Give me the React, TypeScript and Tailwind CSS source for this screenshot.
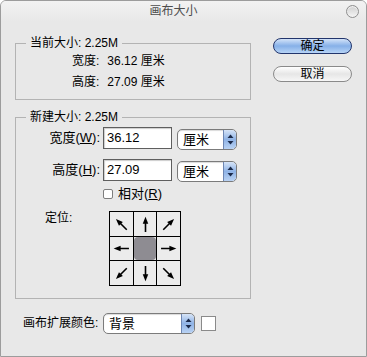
import React from "react";

const FONT = { fontFamily: '"Liberation Sans", "Noto Sans CJK SC", sans-serif' };

function Stepper() {
  return (
    <div className="w-[13px] h-full rounded-r-[4px] border-l border-[#6d86b3] bg-gradient-to-b from-[#d6e4f7] via-[#8fb3e6] to-[#b9d2f3] flex items-center justify-center">
      <svg width="7" height="11" viewBox="0 0 7 11">
        <polygon points="3.5,0.5 6.5,4 0.5,4" fill="#1b2a4a" />
        <polygon points="3.5,10.5 6.5,7 0.5,7" fill="#1b2a4a" />
      </svg>
    </div>
  );
}

function Select({ text, width }: { text: string; width: string }) {
  return (
    <div className={`${width} h-[21px] rounded-[5px] border border-[#7b7b7b] bg-white flex items-stretch overflow-hidden shadow-[inset_0_1px_1px_rgba(0,0,0,0.15)]`}>
      <div className="flex-1 pl-[5px] text-[13px] leading-[19px] text-black">{text}</div>
      <Stepper />
    </div>
  );
}

function Arrow({ deg }: { deg: number }) {
  return (
    <svg width="17" height="17" viewBox="0 0 16 16">
      <g transform={`rotate(${deg} 8 8)`}>
        <line x1="8" y1="15" x2="8" y2="5" stroke="#000" strokeWidth="1.5" />
        <polygon points="8,0.6 5.4,7.2 10.6,7.2" fill="#000" />
      </g>
    </svg>
  );
}

function AnchorGrid() {
  const dirs: (number | null)[] = [315, 0, 45, 270, null, 90, 225, 180, 135];
  return (
    <div className="grid grid-cols-[23px_22px_23px] grid-rows-[24px_23px_24px] gap-px bg-black p-px w-[72px] h-[75px]">
      {dirs.map((d, i) =>
        d === null ? (
          <div key={i} className="bg-[#e8e8e8] flex">
            <div className="flex-1 rounded-[4px] bg-[#8e8c92]" />
          </div>
        ) : (
          <div key={i} className="bg-[#ececec] flex items-center justify-center">
            <Arrow deg={d} />
          </div>
        )
      )}
    </div>
  );
}

function GroupHeader({ title }: { title: string }) {
  return (
    <div className="h-[14px] flex">
      <div className="w-[11px] h-[7px] self-end border-l border-t border-[#b3b3b3]" />
      <div className="px-[4px] text-[12px] leading-[14px] text-black">{title}</div>
      <div className="flex-1 h-[7px] self-end border-r border-t border-[#b3b3b3]" />
    </div>
  );
}

export default function App() {
  return (
    <div className="w-[367px] h-[357px] bg-white" style={FONT}>
      <div className="w-full h-full rounded-t-[6px] border border-[#9c9c9c] bg-[#e8e8e8] flex flex-col overflow-hidden">
        {/* title bar */}
        <div className="h-[21px] flex items-center bg-gradient-to-b from-[#f2f2f2] to-[#e8e8e8]">
          <div className="flex-1 text-center text-[12px] leading-[21px] text-[#4d4d4d]">画布大小</div>
          <div className="w-[13px] h-[13px] mr-[7px] rounded-full border border-[#8e8e8e] bg-gradient-to-b from-[#cfcfcf] to-[#f5f5f5] shadow-[inset_0_1px_1px_rgba(255,255,255,0.8)]" />
        </div>
        {/* body */}
        <div className="flex-1 flex">
          <div className="pl-[14px] w-[250px] flex flex-col">
            {/* current size */}
            <div className="mt-[14px]">
              <GroupHeader title="当前大小: 2.25M" />
              <div className="border-l border-r border-b border-[#b3b3b3] pl-[56px] pt-[1px] pb-[6px] text-[12px] leading-[21px] text-black">
                <div className="flex">
                  <span>宽度:</span>
                  <span className="ml-[8px]">36.12 厘米</span>
                </div>
                <div className="flex">
                  <span>高度:</span>
                  <span className="ml-[8px]">27.09 厘米</span>
                </div>
              </div>
            </div>
            {/* new size */}
            <div className="mt-[10px]">
              <GroupHeader title="新建大小: 2.25M" />
              <div className="border-l border-r border-b border-[#b3b3b3] pt-[3px] pb-[12px]">
                <div className="flex items-start h-[22px]">
                  <div className="w-[84px] text-right text-[13px] leading-[22px] text-black">
                    宽度(<span className="underline">W</span>):
                  </div>
                  <div className="ml-[3px] w-[69px] h-[22px] border border-[#5e5e5e] bg-white pl-[3px] text-[13px] leading-[20px] text-black shadow-[inset_1px_1px_1px_rgba(0,0,0,0.2)]">36.12</div>
                  <div className="ml-[5px] mt-[2px]">
                    <Select text="厘米" width="w-[60px]" />
                  </div>
                </div>
                <div className="mt-[10px] flex items-start h-[22px]">
                  <div className="w-[84px] text-right text-[13px] leading-[22px] text-black">
                    高度(<span className="underline">H</span>):
                  </div>
                  <div className="ml-[3px] w-[69px] h-[22px] border border-[#5e5e5e] bg-white pl-[3px] text-[13px] leading-[20px] text-black shadow-[inset_1px_1px_1px_rgba(0,0,0,0.2)]">27.09</div>
                  <div className="ml-[5px] mt-[2px]">
                    <Select text="厘米" width="w-[60px]" />
                  </div>
                </div>
                <div className="mt-[6px] h-[14px] flex items-center pl-[87px]">
                  <div className="w-[10px] h-[10px] rounded-[2px] border border-[#7e7e7e] bg-white" />
                  <span className="ml-[5px] text-[13px] leading-[14px] text-black">
                    相对(<span className="underline">R</span>)
                  </span>
                </div>
                <div className="mt-[10px] flex items-start pl-[29px]">
                  <div className="w-[64px] text-[12px] leading-[14px] text-black">定位:</div>
                  <AnchorGrid />
                </div>
              </div>
            </div>
            {/* canvas extension colour */}
            <div className="mt-[14px] ml-[8px] flex items-center h-[21px]">
              <div className="w-[80px] text-[12px] leading-[21px] text-black">画布扩展颜色:</div>
              <Select text="背景" width="w-[92px]" />
              <div className="ml-[6px] w-[15px] h-[15px] border border-[#8a8a8a] bg-white" />
            </div>
          </div>
          {/* buttons */}
          <div className="ml-[22px] flex flex-col">
            <div className="mt-[16px] w-[79px] h-[16px] rounded-full border border-[#22356c] bg-gradient-to-b from-[#d3e3f8] via-[#86b0e8] to-[#b7d4f6] text-center text-[12px] leading-[14px] text-black">
              确定
            </div>
            <div className="mt-[12px] w-[79px] h-[16px] rounded-full border border-[#8a8a8a] bg-gradient-to-b from-[#ffffff] via-[#e6e6e6] to-[#f7f7f7] text-center text-[12px] leading-[14px] text-black">
              取消
            </div>
          </div>
        </div>
      </div>
    </div>
  );
}
